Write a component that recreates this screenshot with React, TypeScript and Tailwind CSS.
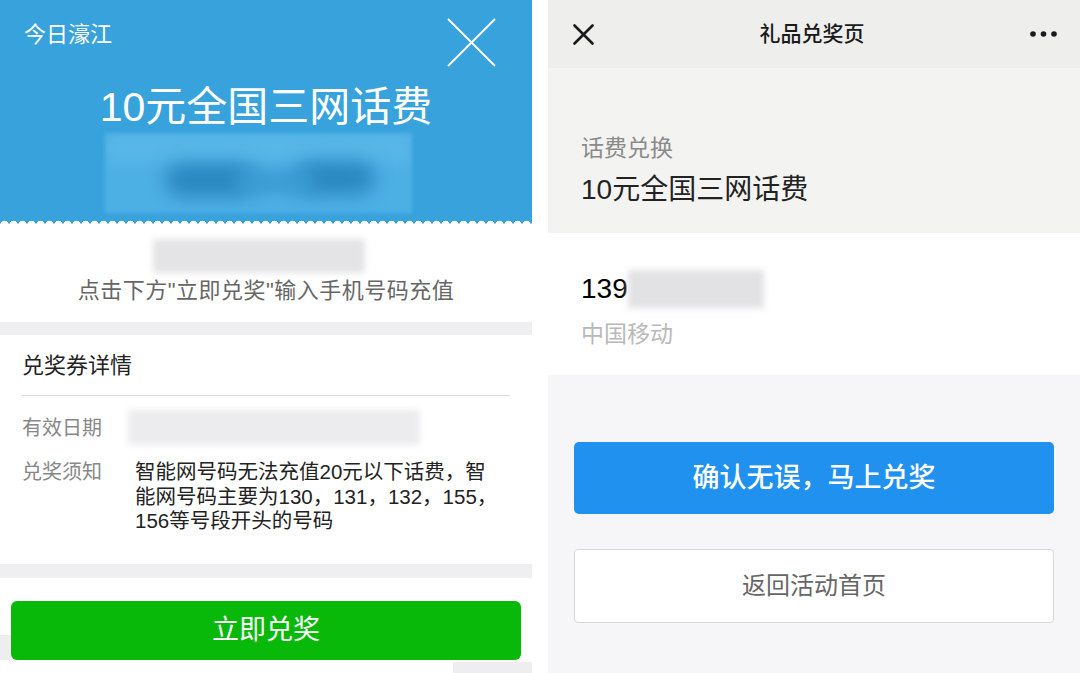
import React from 'react'

const FONT = "font-['Liberation_Sans','Noto_Sans_CJK_SC',sans-serif]"

function Blur({ className }: { className: string }) {
  return <div className={`blur-[3px] ${className}`} />
}

function CouponPanel() {
  return (
    <div className="relative w-[532px] h-full flex flex-col bg-white overflow-hidden">
      {/* 蓝色头部 */}
      <div className="relative h-[224px] bg-[#37a2dc] shrink-0">
        <div className="flex justify-between items-start pl-[24px] pr-[36px] pt-[18px]">
          <span className="mt-[4px] text-[22px] leading-[26px] text-white">今日濠江</span>
          <svg width="49" height="49" viewBox="0 0 49 49">
            <line x1="1" y1="1" x2="48" y2="48" stroke="white" strokeWidth="2" />
            <line x1="48" y1="1" x2="1" y2="48" stroke="white" strokeWidth="2" />
          </svg>
        </div>
        <h1 className="mt-[16px] text-center text-[41px] leading-[48px] text-white">10元全国三网话费</h1>
        <div className="relative mt-[2px] ml-[105px] w-[307px] h-[80px] bg-[#4db0e5] blur-[2px] overflow-hidden">
          <div className="absolute left-0 right-0 top-0 h-[30px] bg-[#58b6e8] blur-[6px]" />
          <div className="absolute left-[60px] top-[30px] w-[90px] h-[34px] rounded-full bg-[#2a88c0] blur-[9px]" />
          <div className="absolute left-[190px] top-[28px] w-[80px] h-[34px] rounded-full bg-[#2a88c0] blur-[9px]" />
          <div className="absolute left-[130px] top-[38px] w-[80px] h-[22px] rounded-full bg-[#3a9ad2] blur-[8px]" />
        </div>
        {/* 锯齿边 */}
        <div className="absolute left-0 right-0 bottom-0 h-[7px] bg-[radial-gradient(circle_at_4.5px_8px,#ffffff_4px,transparent_4.6px)] bg-[length:9px_7px]" />
      </div>

      <div className="flex flex-col items-start pb-[17px]">
        <Blur className="mt-[15px] ml-[153px] w-[212px] h-[34px] bg-[#e4e4e6]" />
        <p className="self-stretch mt-[4px] text-center text-[22px] leading-[28px] tracking-[0.5px] text-[#666]">
          点击下方"立即兑奖"输入手机号码充值
        </p>
      </div>

      <div className="h-[13px] bg-[#efeff2] shrink-0" />

      {/* 兑奖券详情 */}
      <div className="pt-[17px] pb-[30px]">
        <h2 className="px-[22px] text-[22px] leading-[28px] text-[#222]">兑奖券详情</h2>
        <div className="mx-[22px] mt-[15px] h-px bg-[#dcdcdc]" />
        <div className="flex items-center px-[22px] mt-[14px]">
          <span className="w-[106px] text-[20px] leading-[26px] text-[#888]">有效日期</span>
          <Blur className="w-[292px] h-[35px] bg-[#ececee]" />
        </div>
        <div className="flex items-start px-[22px] mt-[15px]">
          <span className="w-[113px] shrink-0 text-[20px] leading-[24.5px] text-[#888]">兑奖须知</span>
          <p className="w-[366px] text-[20.5px] leading-[24.5px] text-[#222]">
            智能网号码无法充值20元以下话费，智能网号码主要为130，131，132，155，156等号段开头的号码
          </p>
        </div>
      </div>

      <div className="h-[14px] bg-[#efeff2] shrink-0" />
      <div className="flex-1 bg-white" />

      <div className="absolute left-0 top-[635px] w-[12px] h-[25px] bg-[#eeeef0]" />
      <div className="absolute left-[453px] top-[662px] w-[79px] h-[11px] bg-[#eeeef0]" />

      <button className="absolute left-[11px] right-[11px] bottom-[13px] h-[59px] rounded-[6px] bg-[#09b909] text-[27px] text-white">
        立即兑奖
      </button>
    </div>
  )
}

function RedeemPanel() {
  return (
    <div className="w-[532px] h-full flex flex-col bg-[#f6f6f8]">
      <div className="relative h-[68px] shrink-0 flex items-center justify-between pl-[25px] pr-[23px] bg-[#eeefed]">
        <svg width="21" height="21" viewBox="0 0 21 21">
          <line x1="1.5" y1="1.5" x2="19.5" y2="19.5" stroke="#1a1a1a" strokeWidth="2.6" strokeLinecap="round" />
          <line x1="19.5" y1="1.5" x2="1.5" y2="19.5" stroke="#1a1a1a" strokeWidth="2.6" strokeLinecap="round" />
        </svg>
        <span className="text-[21px] font-medium text-[#1a1a1a]">礼品兑奖页</span>
        <svg width="27" height="6" viewBox="0 0 27 6">
          <circle cx="3" cy="3" r="2.8" fill="#1a1a1a" />
          <circle cx="13.5" cy="3" r="2.8" fill="#1a1a1a" />
          <circle cx="24" cy="3" r="2.8" fill="#1a1a1a" />
        </svg>
      </div>

      <div className="h-[165px] shrink-0 bg-[#f3f4f2] px-[33px] pt-[65px]">
        <p className="text-[23px] leading-[30px] text-[#8a8a8a]">话费兑换</p>
        <p className="mt-[10px] text-[28px] leading-[34px] text-[#222]">10元全国三网话费</p>
      </div>

      <div className="h-[142px] shrink-0 bg-white px-[33px] pt-[37px]">
        <div className="flex items-center">
          <span className="text-[28px] leading-[34px] text-black">139</span>
          <Blur className="w-[136px] h-[38px] bg-[#e2e2e4]" />
        </div>
        <p className="mt-[11px] text-[23px] leading-[30px] text-[#b9b9b9]">中国移动</p>
      </div>

      <div className="flex flex-col px-[26px] pt-[67px]">
        <button className="h-[72px] rounded-[5px] bg-[#2191ef] text-[27px] font-medium text-white">
          确认无误，马上兑奖
        </button>
        <button className="mt-[35px] h-[74px] rounded-[4px] border border-[#d8d8da] bg-white text-[24px] text-[#666]">
          返回活动首页
        </button>
      </div>
    </div>
  )
}

export default function App() {
  return (
    <div className={`w-[1080px] h-[673px] flex gap-[16px] bg-white overflow-hidden ${FONT}`}>
      <CouponPanel />
      <RedeemPanel />
    </div>
  )
}
